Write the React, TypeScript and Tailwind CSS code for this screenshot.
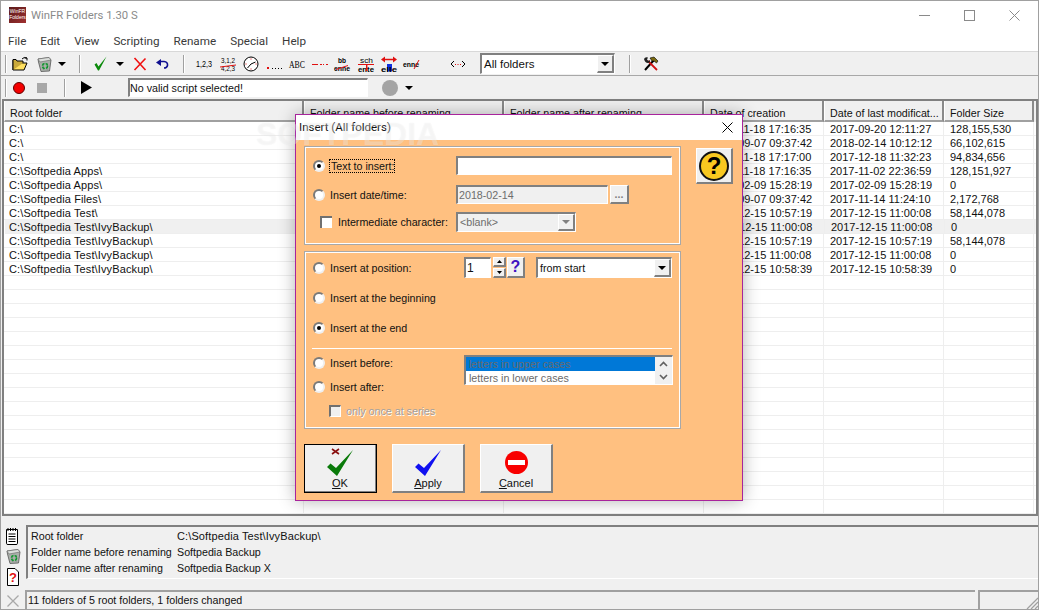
import React from "react";

const raised = "border-t border-l border-t-white border-l-white border-r-2 border-b-2 border-r-[#808080] border-b-[#808080]";
const sunken = "border-t-2 border-l-2 border-t-[#808080] border-l-[#808080] border-r border-b border-r-white border-b-white";
const F = "'Liberation Sans', sans-serif";

function Sep({ className = "" }: { className?: string }) {
  return <div className={"w-[2px] h-[18px] border-l border-l-[#a0a0a0] border-r border-r-white " + className} />;
}

function Arrow({ className = "" }: { className?: string }) {
  return (
    <svg width="8" height="4" viewBox="0 0 8 4" className={className}>
      <path d="M0 0H8L4 4Z" fill="#000" />
    </svg>
  );
}

function Ico({ children, className = "", w = 16, h = 16, pad = 0 }: { children: React.ReactNode; className?: string; w?: number; h?: number; pad?: number }) {
  return (
    <svg width={w} height={h + pad * 2} viewBox={`0 ${-pad} ${w} ${h + pad * 2}`} className={"shrink-0 overflow-visible " + className}>
      {children}
    </svg>
  );
}

function T({ x, y, s = 7, c = "#000", fw = "normal", children, len }: { x: number; y: number; s?: number; c?: string; fw?: string; children: string; len?: number }) {
  return (
    <text x={x} y={y} fontSize={s} fill={c} fontWeight={fw} fontFamily={F} textLength={len} lengthAdjust={len ? "spacingAndGlyphs" : undefined}>
      {children}
    </text>
  );
}

function Trash({ className = "" }: { className?: string }) {
  return (
    <Ico className={className}>
      <path d="M2 3 L13 1.5 L15 4 L13.5 15 L5 15.5 L2.5 6Z" fill="#aab0aa" stroke="#555" strokeWidth="0.8" />
      <path d="M2 3 L13 1.5 L15 4 L4 6Z" fill="#dcdfdc" stroke="#666" strokeWidth="0.6" />
      <path d="M7 7 L7.5 14 M11.5 7 L11 14" stroke="#777" strokeWidth="0.6" />
      <circle cx="9" cy="10" r="2.6" fill="none" stroke="#0a9a2a" strokeWidth="1.5" strokeDasharray="3 1.2" />
    </Ico>
  );
}

function Radio({ on = false }: { on?: boolean }) {
  return (
    <div className="w-[12px] h-[12px] shrink-0 rounded-full bg-white border-2 border-t-[#7a7a7a] border-l-[#7a7a7a] border-r-[#f0f0f0] border-b-[#f0f0f0] flex items-center justify-center">
      {on && <div className="w-[4px] h-[4px] rounded-full bg-black" />}
    </div>
  );
}

function Check({ className = "", disabled = false }: { className?: string; disabled?: boolean }) {
  return <div className={"w-[12px] h-[12px] shrink-0 border-t-2 border-l-2 border-t-[#707070] border-l-[#707070] " + (disabled ? "bg-[#f0f0f0]" : "bg-white") + " " + className} />;
}

function ComboBtn({ disabled = false }: { disabled?: boolean }) {
  return (
    <div className={"w-[17px] h-full shrink-0 bg-[#f0f0f0] flex items-center justify-center " + raised}>
      <svg width="8" height="4" viewBox="0 0 8 4"><path d="M0 0H8L4 4Z" fill={disabled ? "#808080" : "#000"} /></svg>
    </div>
  );
}

const cols = ["w-[300px]", "w-[200px]", "w-[200px]", "w-[120px]", "w-[120px]", "w-[90px]"];
const heads = ["Root folder", "Folder name before renaming", "Folder name after renaming", "Date of creation", "Date of last modificat...", "Folder Size"];
const rows: string[][] = [
  ["C:\\", "", "", "2017-11-18 17:16:35", "2017-09-20 12:11:27", "128,155,530"],
  ["C:\\", "", "", "2017-09-07 09:37:42", "2018-02-14 10:12:12", "66,102,615"],
  ["C:\\", "", "", "2017-11-18 17:17:00", "2017-12-18 11:32:23", "94,834,656"],
  ["C:\\Softpedia Apps\\", "", "", "2017-11-18 17:16:35", "2017-11-02 22:36:59", "128,151,927"],
  ["C:\\Softpedia Apps\\", "", "", "2017-02-09 15:28:19", "2017-02-09 15:28:19", "0"],
  ["C:\\Softpedia Files\\", "", "", "2017-09-07 09:37:42", "2017-11-14 11:24:10", "2,172,768"],
  ["C:\\Softpedia Test\\", "", "", "2017-12-15 10:57:19", "2017-12-15 11:00:08", "58,144,078"],
  ["C:\\Softpedia Test\\IvyBackup\\", "", "", "2017-12-15 11:00:08", "2017-12-15 11:00:08", "0"],
  ["C:\\Softpedia Test\\IvyBackup\\", "", "", "2017-12-15 10:57:19", "2017-12-15 10:57:19", "58,144,078"],
  ["C:\\Softpedia Test\\IvyBackup\\", "", "", "2017-12-15 11:00:08", "2017-12-15 11:00:08", "0"],
  ["C:\\Softpedia Test\\IvyBackup\\", "", "", "2017-12-15 10:58:39", "2017-12-15 10:58:39", "0"],
];
const allRows = [...rows, ...Array.from({ length: 17 }, () => ["", "", "", "", "", ""])];

function Toolbar1() {
  return (
    <div className="h-[23px] flex items-center bg-[#f0f0f0]">
      <Sep className="ml-[4px]" />
      <Ico className="ml-[5px]">
        <path d="M1 4 L1 14 L12 14 L15 7 L5 7 L3 12" fill="#ffe060" stroke="#000" strokeWidth="1" />
        <path d="M1 14 V3.5 H4 L5 5 H11 V7" fill="#c9a93a" stroke="#000" strokeWidth="1" />
        <path d="M10 3 Q12 0.5 15 2 M15 2 V4.5 M15 2 H12.5" fill="none" stroke="#000" strokeWidth="1" />
      </Ico>
      <Trash className="ml-[8px]" />
      <Arrow className="ml-[6px]" />
      <Sep className="ml-[13px]" />
      <Ico className="ml-[13px]" w={13} h={15}>
        <path d="M0.5 8.5 L2.5 7 L4.5 10.5 L12.5 0.5 L5 14.5 L4 14.5Z" fill="#0a8a0a" />
      </Ico>
      <Arrow className="ml-[9px]" />
      <Ico className="ml-[9px]" w={14} h={14}>
        <path d="M1.5 1 L12.5 13 M12.5 1.5 L1.5 13" stroke="#f01010" strokeWidth="1.6" fill="none" />
      </Ico>
      <Ico className="ml-[8px]" w={14} h={14}>
        <path d="M4.5 4.5 H9 Q13 5 12.5 8.5 Q12 11 9 11" fill="none" stroke="#101090" strokeWidth="1.6" />
        <path d="M1 5.5 L6 2 V9Z" fill="#101090" />
      </Ico>
      <Sep className="ml-[14px]" />
      <Ico className="ml-[11px]" pad={1}><T x={0} y={11} s={8.5} len={16}>1,2,3</T></Ico>
      <Ico className="ml-[8px]" pad={2}>
        <T x={1} y={6.5} s={8} len={14}>3,1,2</T>
        <T x={1} y={15} s={8} len={14}>4,2,3</T>
        <path d="M0 11 L16 9" stroke="#e01010" strokeWidth="1" />
      </Ico>
      <Ico className="ml-[7px]">
        <circle cx="8" cy="8" r="7" fill="#fff" stroke="#000" strokeWidth="1" />
        <path d="M8 8 L12.5 6 M8 8 L4.5 12" stroke="#000" strokeWidth="1" />
        <path d="M7.5 2.5h1v1h-1zM7.5 12.5h1v1h-1zM2.5 7.5h1v1h-1zM12.5 7.5h1v1h-1z" fill="#e01010" />
      </Ico>
      <Ico className="ml-[7px]">
        <rect x="1" y="11" width="2" height="2" fill="#e01010" />
        <path d="M6 12h1v1H6zM9 12h1v1H9zM12 12h1v1h-1zM15 12h1v1h-1z" fill="#000" />
      </Ico>
      <Ico className="ml-[7px]" pad={1}><text x="0" y="12" fontSize="9.5" fontFamily="'Liberation Serif', serif" textLength={16} lengthAdjust="spacingAndGlyphs" fill="#000">ABC</text></Ico>
      <Ico className="ml-[7px]">
        <rect x="0" y="8" width="6" height="1" fill="#e01010" />
        <path d="M8 8h2v1H8zM11 8h1v1h-1zM14 8h2v1h-2z" fill="#e01010" />
      </Ico>
      <Ico className="ml-[6px]" pad={2}>
        <T x={4} y={7} s={8} fw="bold" len={8}>bb</T>
        <T x={0} y={15} s={8} fw="bold" len={16}>enne</T>
        <path d="M2 13.5 L14 9.5" stroke="#e01010" strokeWidth="1" />
      </Ico>
      <Ico className="ml-[8px]" pad={2}>
        <T x={2} y={6.5} s={8} len={13}>sch</T>
        <rect x="0" y="8" width="16" height="1" fill="#e01010" />
        <T x={0} y={15.5} s={8} fw="bold" len={16}>ente</T>
        <rect x="8" y="9" width="1.4" height="6" fill="#e01010" />
      </Ico>
      <Ico className="ml-[7px]" pad={2}>
        <path d="M0 3.5 L4 0.5 V2.8 H12 V0.5 L16 3.5 L12 6.5 V4.2 H4 V6.5Z" fill="#e01010" />
        <rect x="6" y="8" width="5" height="7.5" fill="#1030e0" />
        <T x={0} y={15.5} s={8} fw="bold" len={16}>elle</T>
      </Ico>
      <Ico className="ml-[6px]" pad={1}>
        <T x={0} y={11} s={8} fw="bold" len={16}>enne</T>
        <path d="M11 13 L16 4" stroke="#e01010" strokeWidth="1" />
      </Ico>
      <Ico className="ml-[31px]">
        <path d="M4 5 L1 8 L4 11 M12 5 L15 8 L12 11" fill="none" stroke="#000" strokeWidth="1" />
        <path d="M5 8h1v1H5zM7.5 8h1v1h-1zM10 8h1v1h-1z" fill="#e01010" />
      </Ico>
      <div className={"ml-[14px] w-[135px] h-[21px] bg-white flex items-center shrink-0 " + sunken}>
        <span className="flex-1 pl-[2px] text-[11.5px]">All folders</span>
        <ComboBtn />
      </div>
      <Sep className="ml-[14px]" />
      <Ico className="ml-[12px]">
        <path d="M2 14 L11 4" stroke="#000" strokeWidth="2" />
        <path d="M7 2 L11 1 L15 5 L13.5 7 L11 5 L9 5Z" fill="#7a6a10" stroke="#000" strokeWidth="0.6" />
        <path d="M14 14 L5 5 " stroke="#d01010" strokeWidth="1.8" />
        <path d="M1 3 Q2 0.5 5 1.5 L4 3.5 L5.5 5 L7 4 Q7.5 7 5 7 Q2 7 1 3Z" fill="#222" />
      </Ico>
    </div>
  );
}

function Toolbar2() {
  return (
    <div className="h-[23px] flex items-center bg-[#f0f0f0]">
      <Sep className="ml-[4px]" />
      <div className="ml-[6px] w-[12px] h-[12px] rounded-full bg-[#f40000] border border-[#600000]" />
      <div className="ml-[12px] w-[10px] h-[10px] bg-[#a8a8a8]" />
      <Sep className="ml-[17px]" />
      <Ico className="ml-[15px]" w={11} h={13}><path d="M0 0 L11 6.5 L0 13Z" fill="#000" /></Ico>
      <div className={"ml-[36px] w-[240px] h-[19px] bg-white shrink-0 flex items-center text-[10.7px] " + sunken}>No valid script selected!</div>
      <div className="ml-[14px] w-[16px] h-[16px] rounded-full bg-[#a4a4a4]" />
      <Arrow className="ml-[7px]" />
    </div>
  );
}

function Table() {
  return (
    <div className="flex-1 min-h-0 ml-[1px] border-l-2 border-r-2 border-t-2 border-b-2 border-[#808080] bg-white overflow-hidden">
      <div className="flex h-[21px] bg-[#f0f0f0] text-[10.7px]">
        {heads.map((h, i) => (
          <div key={i} className={cols[i] + " shrink-0 flex items-center pl-[5px] pt-[5px] overflow-hidden whitespace-nowrap border-l border-l-white border-b-2 border-b-[#a0a0a0] border-r-2 border-r-[#8a8a8a]"}>
            {h}
          </div>
        ))}
      </div>
      {allRows.map((r, i) => (
        <div key={i} className={"flex h-[14px] border-b border-b-[#eeeeee] " + (i === 7 ? "bg-[#f0f0f0] ml-[1px]" : "")}>
          {r.map((c, j) => (
            <div key={j} className={cols[j] + " shrink-0 overflow-hidden whitespace-nowrap leading-[15px] border-r border-r-[#eeeeee] " + (j === 0 ? "tracking-[0.12px] " + (i === 7 ? "pl-[4px] w-[299px]" : "pl-[5px]") : "pl-[6px]")}>
              {c}
            </div>
          ))}
        </div>
      ))}
    </div>
  );
}

function Bottom() {
  const label = "w-[146px] shrink-0 whitespace-nowrap";
  return (
    <div className="h-[93px] shrink-0 bg-[#f0f0f0] flex flex-col">
      <div className="flex h-[64px] pt-[9px]">
        <div className="w-[24px] shrink-0 flex flex-col pl-[4px] pt-[2px]">
          <Ico w={14} h={18} className="mb-[3px]">
            <path d="M1.5 2.5 H12.5 V16.5 Q12.5 17.5 11 17.5 H3 Q1.5 17.5 1.5 16.5Z" fill="#fff" stroke="#000" />
            <path d="M3 1v3M5.5 1v3M8 1v3M10.5 1v3" stroke="#000" />
            <path d="M3.5 7H10.5M3.5 9.5H10.5M3.5 12H10.5M3.5 14.5H10.5" stroke="#000" />
          </Ico>
          <Trash className="mb-[4px]" />
          <Ico w={14} h={18} className="ml-[1px]">
            <path d="M1.5 0.5 H9 L12.5 4 V17.5 H1.5Z" fill="#fff" stroke="#000" />
            <text x="7" y="14" fontSize="13" fontWeight="bold" fill="#e01010" textAnchor="middle" fontFamily={F}>?</text>
          </Ico>
        </div>
        <div className="flex-1 ml-[1px] border-t-2 border-l-2 border-t-[#808080] border-l-[#808080] border-b border-b-white pl-[3px] pt-[1px] h-[54px] text-[10.7px]">
          <div className="flex h-[16px] items-center"><span className={label}>Root folder</span><span className="text-[11px] tracking-[0.12px]">C:\Softpedia Test\IvyBackup\</span></div>
          <div className="flex h-[16px] items-center"><span className={label}>Folder name before renaming</span><span>Softpedia Backup</span></div>
          <div className="flex h-[16px] items-center"><span className={label}>Folder name after renaming</span><span>Softpedia Backup X</span></div>
        </div>
      </div>
      <div className="flex-1 flex items-stretch">
        <div className="w-[24px] shrink-0 flex items-end pl-[6px] pb-[2px]">
          <Ico w={12} h={12}><path d="M0.5 0.5 L11.5 11.5 M11.5 0.5 L0.5 11.5" stroke="#a8a8a8" strokeWidth="1.3" /></Ico>
        </div>
        <div className="flex-1 flex mt-[10px]">
          <div className="flex-1 border-t-2 border-l-2 border-t-[#a0a0a0] border-l-[#a0a0a0] flex items-center pl-[1px] text-[10.7px]">11 folders of 5 root folders, 1 folders changed</div>
          <div className="w-[60px] ml-[3px] border-t-2 border-l-2 border-t-[#a0a0a0] border-l-[#a0a0a0] flex items-end justify-end">
            <Ico w={12} h={12}><path d="M12 1 L1 12 M12 5 L5 12 M12 9 L9 12" stroke="#a0a0a0" strokeWidth="1.2" /></Ico>
          </div>
        </div>
      </div>
    </div>
  );
}

function LabelRow({ label, on, className = "" }: { label: string; on?: boolean; className?: string }) {
  return (
    <div className={"flex items-center pl-[8px] " + className}>
      <Radio on={on} />
      <span className="ml-[5px] pt-[1px] whitespace-nowrap">{label}</span>
    </div>
  );
}

function DlgBtn({ children, label, rest, def = false, className = "" }: { children: React.ReactNode; label: string; rest: string; def?: boolean; className?: string }) {
  return (
    <div className={"w-[73px] h-[49px] bg-[#f0f0f0] flex flex-col items-center shrink-0 " + (def ? "outline outline-1 -outline-offset-1 outline-black " : "") + raised + " " + className}>
      <div className="h-[30px] mt-[2px] flex items-center justify-center shrink-0">{children}</div>
      <div className="leading-[13px] text-[11px]"><span className="underline">{label}</span>{rest}</div>
    </div>
  );
}

function Dialog() {
  return (
    <div className="absolute left-[295px] top-[114px] w-[448px] h-[387px] flex flex-col border border-[#a8249c] shadow-[0_0_16px_rgba(0,0,0,0.3)] bg-[#ffc080] text-[10.7px]">
      <div className="h-[25px] shrink-0 bg-white flex items-center justify-between pl-[3px] pr-[9px]">
        <span className="text-[11.5px] text-[#111]" style={{ fontFamily: "Roboto, sans-serif" }}>Insert (All folders)</span>
        <Ico w={11} h={11}><path d="M0.5 0.5 L10.5 10.5 M10.5 0.5 L0.5 10.5" stroke="#000" strokeWidth="1" /></Ico>
      </div>
      <div className="flex items-start ml-[8px] mt-[6px]">
        <div className="w-[377px] h-[99px] shrink-0 border border-[#a8a8a8] shadow-[inset_0_0_0_1px_#ffffff]">
          <div className="flex items-center h-[19px] mt-[9px] pl-[8px]">
            <Radio on />
            <span className="ml-[4px] px-[1px] border border-dotted border-black leading-[12px] w-[66px] whitespace-nowrap">Text to insert:</span>
            <div className={"ml-[61px] w-[216px] h-[19px] bg-white " + sunken} />
          </div>
          <div className="flex items-center h-[19px] mt-[10px] pl-[8px]">
            <Radio />
            <span className="ml-[5px] pt-[1px] w-[126px] whitespace-nowrap">Insert date/time:</span>
            <div className={"w-[152px] h-[19px] bg-[#f0f0f0] text-[#6d6d6d] flex items-center pl-[1px] " + sunken}>2018-02-14</div>
            <div className={"ml-[2px] w-[19px] h-[19px] bg-[#f0f0f0] flex items-center justify-center text-[#808080] font-bold leading-[10px] " + raised}>...</div>
          </div>
          <div className="flex items-center h-[20px] mt-[8px] pl-[15px]">
            <Check />
            <span className="ml-[6px] w-[118px] whitespace-nowrap">Intermediate character:</span>
            <div className={"w-[120px] h-[20px] bg-[#f0f0f0] text-[#6d6d6d] flex items-center " + sunken}>
              <span className="flex-1 pl-[2px]">&lt;blank&gt;</span>
              <ComboBtn disabled />
            </div>
          </div>
        </div>
        <div className={"ml-[15px] mt-[2px] w-[37px] h-[36px] bg-[#f0f0f0] flex items-center justify-center " + raised}>
          <div className="w-[30px] h-[30px] rounded-full border-2 border-[#111] bg-[#f8c820] flex items-center justify-center text-[24px] font-bold leading-none text-black">?</div>
        </div>
      </div>

      <div className="ml-[8px] mt-[6px] w-[377px] h-[178px] shrink-0 border border-[#a8a8a8] shadow-[inset_0_0_0_1px_#ffffff]">
        <div className="flex items-center h-[21px] mt-[5px] pl-[8px]">
          <Radio />
          <span className="ml-[5px] pt-[1px] w-[134px] whitespace-nowrap">Insert at position:</span>
          <div className={"w-[27px] h-[21px] bg-white flex items-center pl-[1px] text-[12px] " + sunken}>1</div>
          <div className="ml-[2px] w-[13px] h-[21px] flex flex-col gap-[1px]">
            <div className={"h-[10px] bg-[#f0f0f0] flex items-center justify-center " + raised}>
              <svg width="5" height="3" viewBox="0 0 5 3"><path d="M0 3H5L2.5 0Z" /></svg>
            </div>
            <div className={"h-[10px] bg-[#f0f0f0] flex items-center justify-center " + raised}>
              <svg width="5" height="3" viewBox="0 0 5 3"><path d="M0 0H5L2.5 3Z" /></svg>
            </div>
          </div>
          <div className={"ml-[1px] w-[18px] h-[21px] bg-[#f0f0f0] flex items-center justify-center text-[16px] font-bold text-[#4010c0] leading-none " + raised}>?</div>
          <div className={"ml-[11px] w-[136px] h-[21px] bg-white flex items-center " + sunken}>
            <span className="flex-1 pl-[2px]">from start</span>
            <ComboBtn />
          </div>
        </div>
        <LabelRow label="Insert at the beginning" className="h-[20px] mt-[10px]" />
        <LabelRow label="Insert at the end" on className="h-[20px] mt-[10px]" />
        <div className="ml-[7px] mt-[10px] w-[360px] h-[1px] bg-white" />
        <div className="flex">
          <div className="w-[159px] shrink-0">
            <LabelRow label="Insert before:" className="h-[16px] mt-[6px]" />
            <LabelRow label="Insert after:" className="h-[16px] mt-[8px]" />
            <div className="flex items-center h-[16px] mt-[8px] pl-[24px]">
              <Check disabled className="border-r border-b border-r-white border-b-white" />
              <span className="ml-[5px] pt-[1px] text-[#a0a0a0] [text-shadow:1px_1px_0_#ffffff] whitespace-nowrap">only once at series</span>
            </div>
          </div>
          <div className={"mt-[6px] w-[209px] h-[30px] bg-white flex shrink-0 " + sunken}>
            <div className="flex-1 min-w-0">
              <div className="h-[14px] bg-[#0078d7] text-[#6a6a6a] leading-[14px] pl-[3px]">letters in upper cases</div>
              <div className="h-[14px] text-[#6a6a6a] leading-[14px] pl-[3px]">letters in lower cases</div>
            </div>
            <div className="w-[17px] bg-[#f0f0f0] flex flex-col items-center justify-around py-[1px]">
              <svg width="9" height="6" viewBox="0 0 9 6"><path d="M1 5L4.5 1.5L8 5" fill="none" stroke="#606060" strokeWidth="1.6" /></svg>
              <svg width="9" height="6" viewBox="0 0 9 6"><path d="M1 1L4.5 4.5L8 1" fill="none" stroke="#606060" strokeWidth="1.6" /></svg>
            </div>
          </div>
        </div>
      </div>

      <div className="flex ml-[8px] mt-[15px]">
        <DlgBtn label="O" rest="K" def>
          <svg width="27" height="29" viewBox="0 0 27 29">
            <path d="M5 1 L12 6 M12 1 L5 6" stroke="#8a1010" strokeWidth="1.6" />
            <path d="M0 19 L3.5 15.5 L9 20 L26 2 L10 28Z" fill="#0a7a0a" />
          </svg>
        </DlgBtn>
        <DlgBtn label="A" rest="pply" className="ml-[15px]">
          <svg width="27" height="29" viewBox="0 0 27 29">
            <path d="M0 19 L3.5 15.5 L9 20 L26 2 L10 28Z" fill="#1010f0" />
          </svg>
        </DlgBtn>
        <DlgBtn label="C" rest="ancel" className="ml-[15px]">
          <div className="w-[23px] h-[23px] rounded-full bg-[#f80000] flex items-center justify-center">
            <div className="w-[17px] h-[5px] bg-white" />
          </div>
        </DlgBtn>
      </div>
    </div>
  );
}

export default function App() {
  return (
    <div className="relative w-[1039px] h-[610px] overflow-hidden text-[11px] leading-[13px] text-[#111] font-['Liberation_Sans',sans-serif]">
      <div className="w-full h-full flex flex-col border border-[#a0a0a0] bg-[#f0f0f0]">
        <div className="h-[30px] shrink-0 bg-white flex items-center pb-[2px]">
          <div className="ml-[8px] w-[17px] h-[16px] bg-gradient-to-br from-[#5a1a1a] to-[#a03030] text-[5px] leading-[6px] text-white text-center overflow-hidden pt-[1px] shrink-0">WinFR<br />Folders</div>
          <span className="ml-[5px] text-[11.3px] text-[#8a8a8a]" style={{ fontFamily: "Roboto, sans-serif" }}>WinFR Folders 1.30 S</span>
          <div className="ml-auto flex mr-[1px]">
            <div className="w-[45px] flex justify-center"><Ico w={11} h={11}><path d="M0 5.5H11" stroke="#8a8a8a" /></Ico></div>
            <div className="w-[45px] flex justify-center"><Ico w={11} h={11}><rect x="0.5" y="0.5" width="10" height="10" fill="none" stroke="#8a8a8a" /></Ico></div>
            <div className="w-[45px] flex justify-center"><Ico w={11} h={11}><path d="M0.5 0.5L10.5 10.5M10.5 0.5L0.5 10.5" stroke="#8a8a8a" /></Ico></div>
          </div>
        </div>
        <div className="h-[20px] shrink-0 bg-white flex items-center gap-[14px] pl-[7px] text-[11.7px] text-[#3a3a3a]" style={{ fontFamily: "Roboto, sans-serif" }}>
          <span>File</span><span>Edit</span><span>View</span><span>Scripting</span><span>Rename</span><span>Special</span><span>Help</span>
        </div>
        <div className="h-[1px] shrink-0 bg-[#d8d8d8]" />
        <Toolbar1 />
        <div className="h-[1px] shrink-0 bg-[#a8a8a8]" />
        <Toolbar2 />
        <Table />
        <Bottom />
      </div>
      <Dialog />
      <div className="absolute left-[256px] top-[118px] text-[32px] leading-[32px] font-bold text-white/30 pointer-events-none [text-shadow:0_0_1px_rgba(150,150,150,0.12)]">SOFTPEDIA</div>
    </div>
  );
}
